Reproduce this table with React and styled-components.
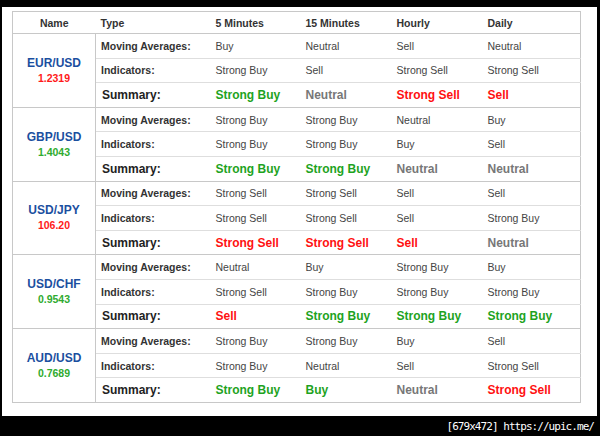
import React from "react";
import styled, { createGlobalStyle } from "styled-components";

const GlobalStyle = createGlobalStyle`
  html, body {
    margin: 0;
    padding: 0;
    background: #000;
  }
  body {
    font-family: "Liberation Sans", Arial, sans-serif;
  }
`;

const Frame = styled.div`
  width: 600px;
  height: 436px;
  background: #000;
  padding: 7px 3px 0 2px;
  box-sizing: border-box;
  display: flex;
  flex-direction: column;
`;

const Panel = styled.div`
  background: #fff;
  height: 409px;
  padding: 4px 0 0 10px;
  box-sizing: border-box;
`;

const Footer = styled.div`
  height: 20px;
  display: flex;
  align-items: center;
  justify-content: flex-end;
  padding-right: 3px;
  color: #fff;
  font-family: "DejaVu Sans Mono", monospace;
  font-size: 11px;
  letter-spacing: -0.95px;
`;

const Table = styled.table`
  width: 568px;
  border-collapse: collapse;
  table-layout: fixed;
  border: 1px solid #c8c8c8;
  font-size: 10.5px;
  color: #444;
`;

const Th = styled.th`
  height: 21px;
  padding: 0 5px;
  text-align: ${(p) => (p.center ? "center" : "left")};
  font-weight: bold;
  color: #333;
  border-bottom: 1px solid #c8c8c8;
`;

const Row = styled.tr`
  height: 24.6px;
  border-bottom: 1px solid ${(p) => (p.last ? "#c8c8c8" : "#dedede")};
`;

const NameCell = styled.td`
  text-align: center;
  vertical-align: middle;
  border-right: 1px solid #c8c8c8;
  border-bottom: 1px solid #c8c8c8;
  padding: 0;
`;

const Pair = styled.div`
  font-size: 12px;
  font-weight: bold;
  line-height: 15px;
  color: #1b4f9f;
`;

const Price = styled.div`
  font-size: 10.5px;
  font-weight: bold;
  line-height: 14px;
  color: ${(p) => (p.up ? "#2fab2f" : "#ff1a1a")};
`;

const Label = styled.td`
  padding: 0 5px;
  font-weight: bold;
  color: ${(p) => (p.summary ? "#222" : "#333")};
  font-size: ${(p) => (p.summary ? "12px" : "10.5px")};
  padding-left: ${(p) => (p.summary ? "6px" : "5px")};
`;

const Cell = styled.td`
  padding: 0 5px;
  white-space: nowrap;
`;

const Signal = styled.td`
  padding: 0 5px;
  font-size: 12px;
  font-weight: bold;
  white-space: nowrap;
  color: ${(p) =>
    p.value.includes("Buy") ? "#1ea31e" : p.value.includes("Sell") ? "#ff1111" : "#777"};
`;

const data = [
  {
    pair: "EUR/USD",
    price: "1.2319",
    up: false,
    ma: ["Buy", "Neutral", "Sell", "Neutral"],
    ind: ["Strong Buy", "Sell", "Strong Sell", "Strong Sell"],
    sum: ["Strong Buy", "Neutral", "Strong Sell", "Sell"],
  },
  {
    pair: "GBP/USD",
    price: "1.4043",
    up: true,
    ma: ["Strong Buy", "Strong Buy", "Neutral", "Buy"],
    ind: ["Strong Buy", "Strong Buy", "Buy", "Sell"],
    sum: ["Strong Buy", "Strong Buy", "Neutral", "Neutral"],
  },
  {
    pair: "USD/JPY",
    price: "106.20",
    up: false,
    ma: ["Strong Sell", "Strong Sell", "Sell", "Sell"],
    ind: ["Strong Sell", "Strong Sell", "Sell", "Strong Buy"],
    sum: ["Strong Sell", "Strong Sell", "Sell", "Neutral"],
  },
  {
    pair: "USD/CHF",
    price: "0.9543",
    up: true,
    ma: ["Neutral", "Buy", "Strong Buy", "Buy"],
    ind: ["Strong Sell", "Strong Buy", "Strong Buy", "Strong Buy"],
    sum: ["Sell", "Strong Buy", "Strong Buy", "Strong Buy"],
  },
  {
    pair: "AUD/USD",
    price: "0.7689",
    up: true,
    ma: ["Strong Buy", "Strong Buy", "Buy", "Sell"],
    ind: ["Strong Buy", "Neutral", "Sell", "Strong Sell"],
    sum: ["Strong Buy", "Buy", "Neutral", "Strong Sell"],
  },
];

const App = () => {
  return (
    <>
      <GlobalStyle />
      <Frame>
        <Panel>
          <Table>
            <colgroup>
              <col style={{ width: 83 }} />
              <col style={{ width: 115 }} />
              <col style={{ width: 90 }} />
              <col style={{ width: 91 }} />
              <col style={{ width: 91 }} />
              <col style={{ width: 98 }} />
            </colgroup>
            <thead>
              <tr>
                <Th center>Name</Th>
                <Th>Type</Th>
                <Th>5 Minutes</Th>
                <Th>15 Minutes</Th>
                <Th>Hourly</Th>
                <Th>Daily</Th>
              </tr>
            </thead>
            <tbody>
              {data.map((d) => (
                <React.Fragment key={d.pair}>
                  <Row>
                    <NameCell rowSpan={3}>
                      <Pair>{d.pair}</Pair>
                      <Price up={d.up}>{d.price}</Price>
                    </NameCell>
                    <Label>Moving Averages:</Label>
                    {d.ma.map((v, i) => (
                      <Cell key={i}>{v}</Cell>
                    ))}
                  </Row>
                  <Row>
                    <Label>Indicators:</Label>
                    {d.ind.map((v, i) => (
                      <Cell key={i}>{v}</Cell>
                    ))}
                  </Row>
                  <Row last>
                    <Label summary>Summary:</Label>
                    {d.sum.map((v, i) => (
                      <Signal key={i} value={v}>
                        {v}
                      </Signal>
                    ))}
                  </Row>
                </React.Fragment>
              ))}
            </tbody>
          </Table>
        </Panel>
        <Footer>[679x472] https://upic.me/</Footer>
      </Frame>
    </>
  );
};

export default App;
